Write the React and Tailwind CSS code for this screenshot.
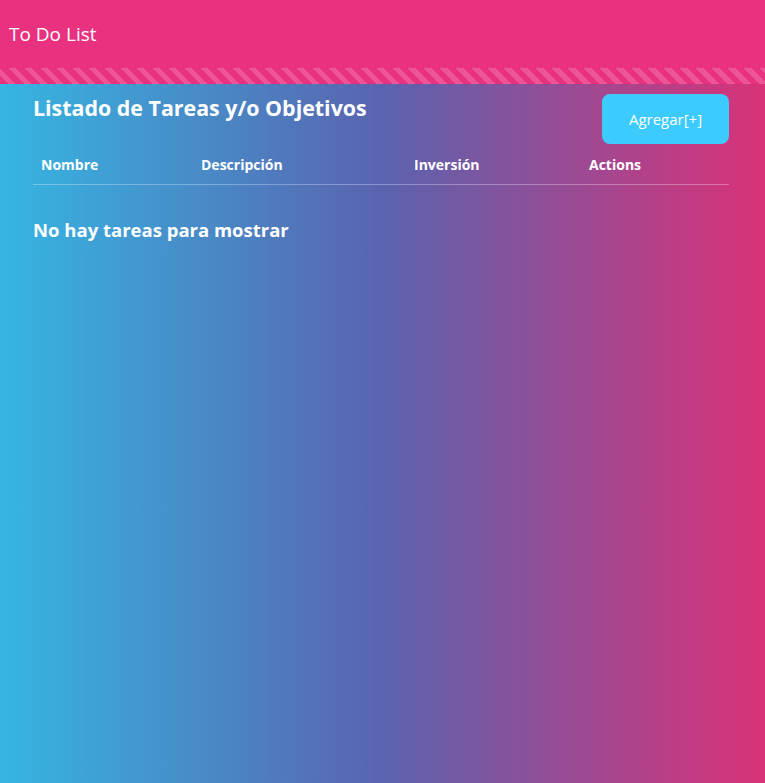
export default function App() {
  return (
    <div className="min-h-screen flex flex-col bg-[linear-gradient(to_right,#35b6e2_0%,#5a63af_50%,#da3278_100%)] text-white" style={{ fontFamily: '"Open Sans", "Noto Sans", sans-serif' }}>
      <header className="h-[68px] bg-[#e8327f] flex items-center px-[9px]">
        <span className="text-[19px] leading-none">To Do List</span>
      </header>
      <div className="h-[16px] bg-[#e8327f] bg-[repeating-linear-gradient(45deg,#e8327f_0px,#e8327f_6px,#ee5597_6px,#ee5597_11.3px)]" />
      <main className="ml-[33px] mr-[36px] flex flex-col">
        <div className="flex justify-between items-start pt-[10px]">
          <h1 className="text-[21.4px] font-bold leading-[28px]">Listado de Tareas y/o Objetivos</h1>
          <button className="w-[127px] h-[50px] rounded-[8px] bg-[#3ccbfc] text-[15px] text-white">Agregar[+]</button>
        </div>
        <div className="grid grid-cols-[160px_213px_175px_1fr] text-[14px] font-bold h-[41px] items-center border-b border-white/30">
          <div className="px-2">Nombre</div>
          <div className="px-2">Descripción</div>
          <div className="px-2">Inversión</div>
          <div className="px-2">Actions</div>
        </div>
        <p className="text-[18.5px] font-bold mt-[32px] leading-[26px]">No hay tareas para mostrar</p>
      </main>
    </div>
  );
}
